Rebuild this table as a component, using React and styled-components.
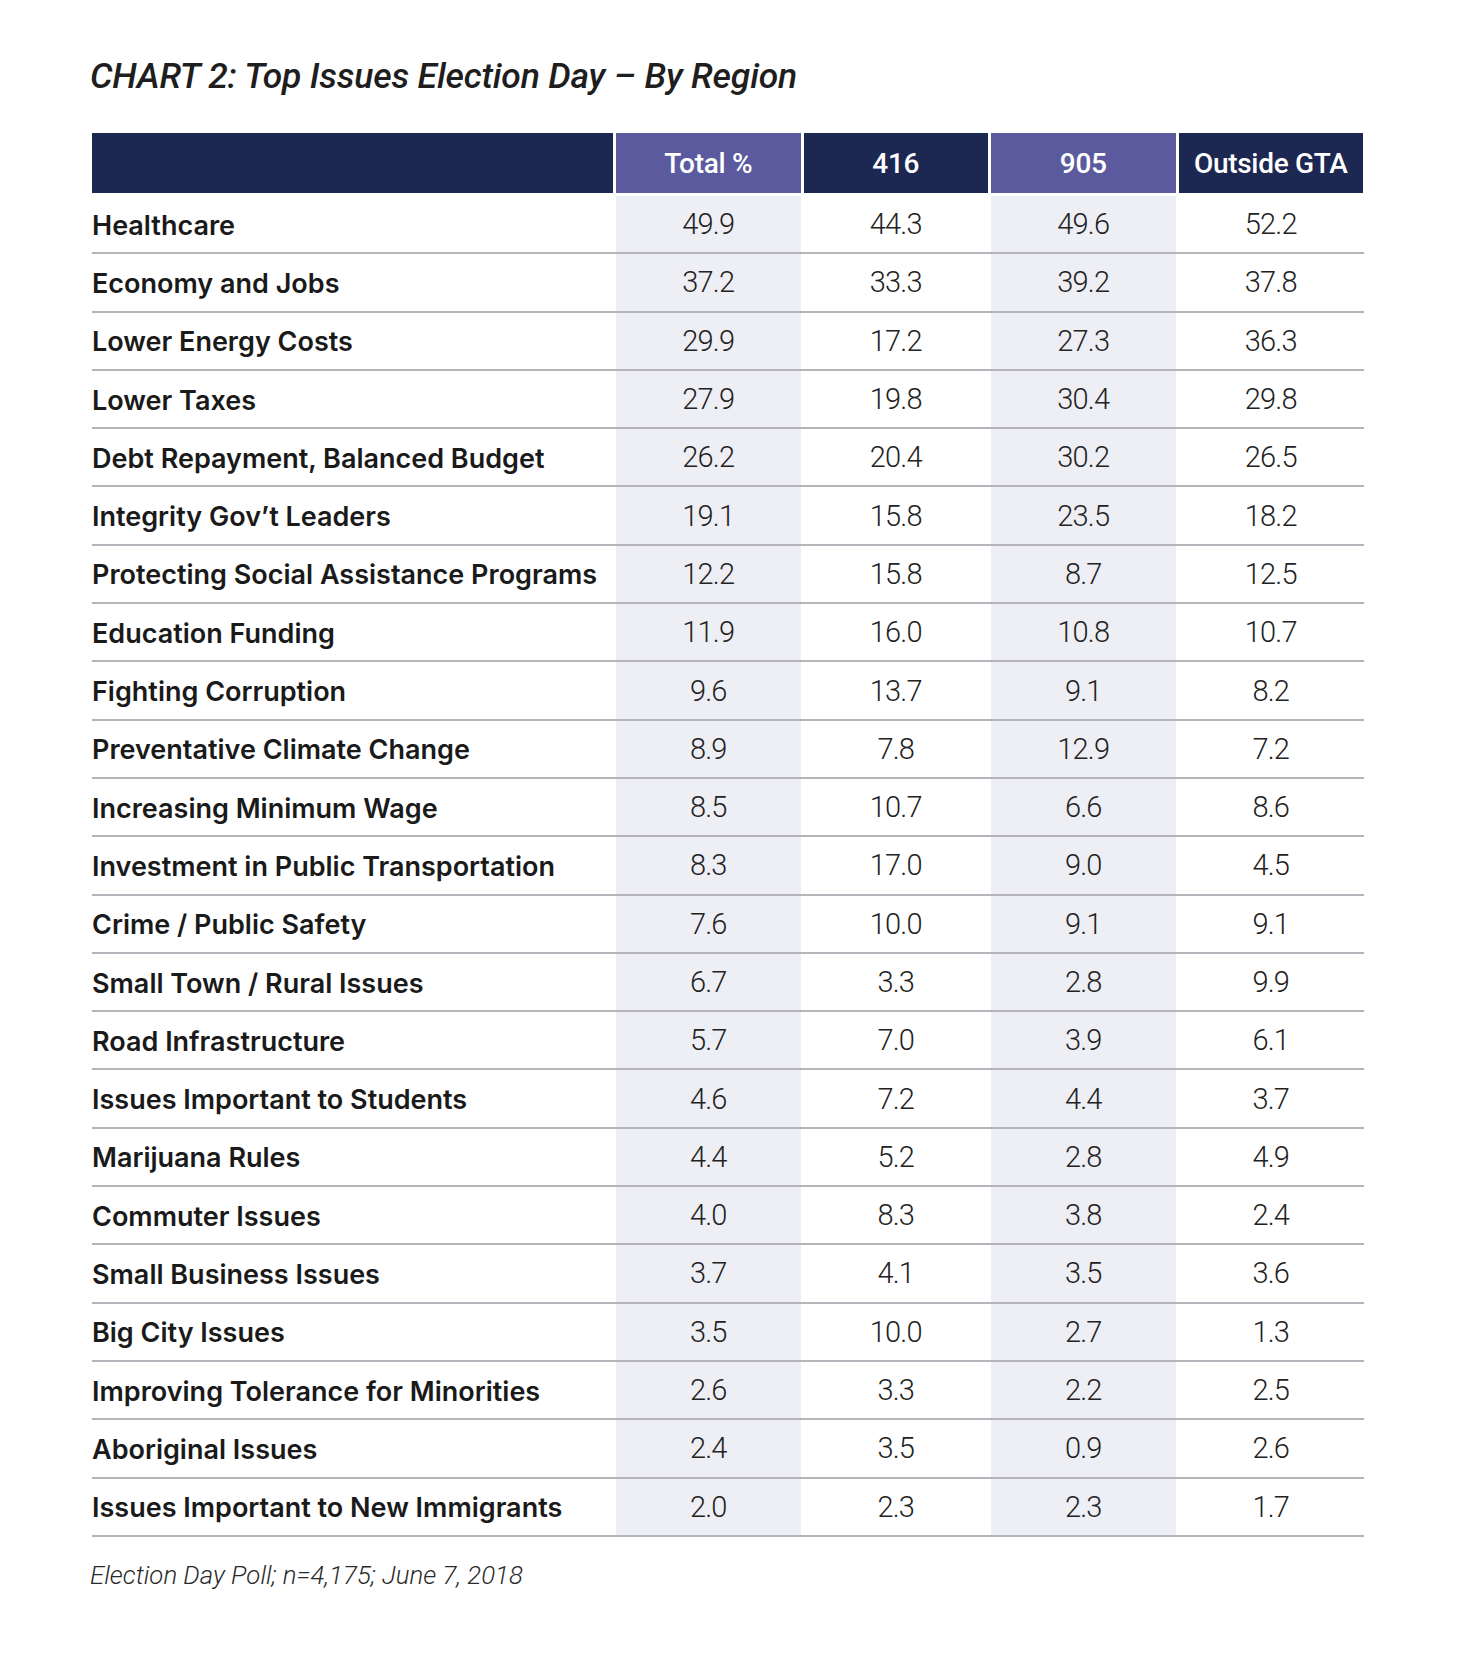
import React from "react";
import styled, { createGlobalStyle } from "styled-components";

const GlobalStyle = createGlobalStyle`
  body {
    margin: 0;
    background: #ffffff;
    font-family: Roboto, "Liberation Sans", sans-serif;
  }
`;

const NAVY = "#1c2752";
const PURPLE = "#5b5a9e";
const SHADE = "#eeeef5";

const columns = [
  { title: "Total %", accent: true },
  { title: "416", accent: false },
  { title: "905", accent: true },
  { title: "Outside GTA", accent: false },
];

const rows = [
  ["Healthcare", "49.9", "44.3", "49.6", "52.2"],
  ["Economy and Jobs", "37.2", "33.3", "39.2", "37.8"],
  ["Lower Energy Costs", "29.9", "17.2", "27.3", "36.3"],
  ["Lower Taxes", "27.9", "19.8", "30.4", "29.8"],
  ["Debt Repayment, Balanced Budget", "26.2", "20.4", "30.2", "26.5"],
  ["Integrity Gov’t Leaders", "19.1", "15.8", "23.5", "18.2"],
  ["Protecting Social Assistance Programs", "12.2", "15.8", "8.7", "12.5"],
  ["Education Funding", "11.9", "16.0", "10.8", "10.7"],
  ["Fighting Corruption", "9.6", "13.7", "9.1", "8.2"],
  ["Preventative Climate Change", "8.9", "7.8", "12.9", "7.2"],
  ["Increasing Minimum Wage", "8.5", "10.7", "6.6", "8.6"],
  ["Investment in Public Transportation", "8.3", "17.0", "9.0", "4.5"],
  ["Crime / Public Safety", "7.6", "10.0", "9.1", "9.1"],
  ["Small Town / Rural Issues", "6.7", "3.3", "2.8", "9.9"],
  ["Road Infrastructure", "5.7", "7.0", "3.9", "6.1"],
  ["Issues Important to Students", "4.6", "7.2", "4.4", "3.7"],
  ["Marijuana Rules", "4.4", "5.2", "2.8", "4.9"],
  ["Commuter Issues", "4.0", "8.3", "3.8", "2.4"],
  ["Small Business Issues", "3.7", "4.1", "3.5", "3.6"],
  ["Big City Issues", "3.5", "10.0", "2.7", "1.3"],
  ["Improving Tolerance for Minorities", "2.6", "3.3", "2.2", "2.5"],
  ["Aboriginal Issues", "2.4", "3.5", "0.9", "2.6"],
  ["Issues Important to New Immigrants", "2.0", "2.3", "2.3", "1.7"],
];

const Page = styled.div`
  padding: 56px 0 60px 92px;
  width: 1272px;
`;

const Title = styled.h2`
  margin: 0 0 37px -2px;
  font-family: Roboto, "Liberation Sans", sans-serif;
  font-style: italic;
  font-weight: 500;
  font-size: 35.5px;
  line-height: 40px;
  color: #1e1e1e;
  letter-spacing: -0.2px;
`;

const Table = styled.div`
  display: flex;
  flex-direction: column;
`;

const HeadRow = styled.div`
  display: grid;
  grid-template-columns: 521px repeat(4, 184.5px);
  column-gap: 3px;
  height: 60px;
  margin-bottom: 3px;
`;

const HeadCell = styled.div`
  display: flex;
  align-items: center;
  justify-content: center;
  background: ${(p) => (p.$accent ? PURPLE : NAVY)};
  color: #ffffff;
  font-family: Roboto, "Liberation Sans", sans-serif;
  font-weight: 500;
  font-size: 28px;
  letter-spacing: -0.3px;
`;

const Row = styled.div`
  display: grid;
  grid-template-columns: 521px repeat(4, 184.5px);
  column-gap: 3px;
  height: 58.3px;
  box-sizing: border-box;
  border-bottom: 2px solid #b4b4ba;
`;

const Label = styled.div`
  display: flex;
  align-items: center;
  padding-top: 2px;
  font-family: Inter, "Liberation Sans", sans-serif;
  font-weight: 600;
  font-size: 27px;
  letter-spacing: 0px;
  color: #1a1a1a;
  white-space: nowrap;
`;

const Value = styled.div`
  display: flex;
  align-items: center;
  justify-content: center;
  background: ${(p) => (p.$shaded ? SHADE : "transparent")};
  font-family: Roboto, "Liberation Sans", sans-serif;
  font-weight: 300;
  font-size: 29px;
  letter-spacing: -0.8px;
  color: #222222;
`;

const Source = styled.p`
  margin: 23px 0 0 -2px;
  font-family: Roboto, "Liberation Sans", sans-serif;
  font-style: italic;
  font-weight: 300;
  font-size: 25.8px;
  line-height: 30px;
  color: #2a2a2a;
`;

export default function App() {
  return (
    <>
      <GlobalStyle />
      <Page>
        <Title>CHART 2: Top Issues Election Day – By Region</Title>
        <Table>
          <HeadRow>
            <HeadCell />
            {columns.map((c) => (
              <HeadCell key={c.title} $accent={c.accent}>
                {c.title}
              </HeadCell>
            ))}
          </HeadRow>
          {rows.map(([label, ...values]) => (
            <Row key={label}>
              <Label>{label}</Label>
              {values.map((v, i) => (
                <Value key={i} $shaded={columns[i].accent}>
                  {v}
                </Value>
              ))}
            </Row>
          ))}
        </Table>
        <Source>Election Day Poll; n=4,175; June 7, 2018</Source>
      </Page>
    </>
  );
}
